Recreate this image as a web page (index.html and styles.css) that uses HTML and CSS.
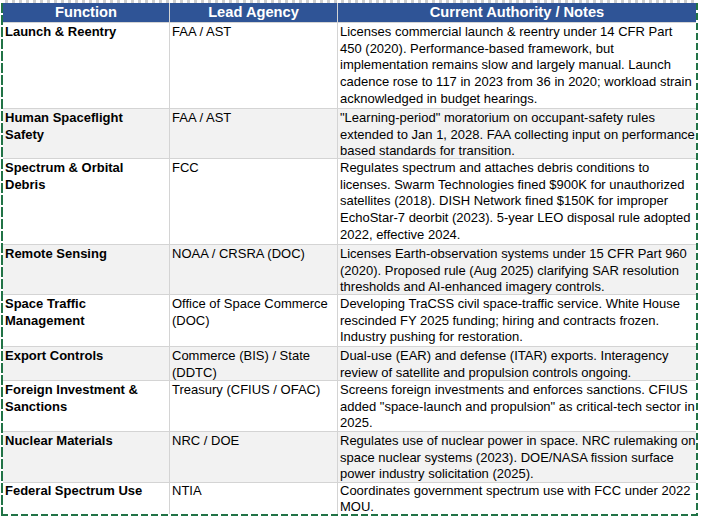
FILE: index.html
```html
<!DOCTYPE html>
<html>
<head>
<meta charset="utf-8">
<link rel="stylesheet" href="styles.css">
</head>
<body>
<div class="sheet">
  <div class="grid">
    <div class="hd">Function</div>
    <div class="hd">Lead Agency</div>
    <div class="hd">Current Authority / Notes</div>

    <div class="c fn">Launch &amp; Reentry</div>
    <div class="c">FAA / AST</div>
    <div class="c">Licenses commercial launch &amp; reentry under 14 CFR Part<br>450 (2020). Performance-based framework, but<br>implementation remains slow and largely manual. Launch<br>cadence rose to 117 in 2023 from 36 in 2020; workload strain<br>acknowledged in budget hearings.</div>

    <div class="c fn alt">Human Spaceflight<br>Safety</div>
    <div class="c alt">FAA / AST</div>
    <div class="c alt">"Learning-period" moratorium on occupant-safety rules<br>extended to Jan 1, 2028. FAA collecting input on performance<br>based standards for transition.</div>

    <div class="c fn">Spectrum &amp; Orbital<br>Debris</div>
    <div class="c">FCC</div>
    <div class="c">Regulates spectrum and attaches debris conditions to<br>licenses. Swarm Technologies fined $900K for unauthorized<br>satellites (2018). DISH Network fined $150K for improper<br>EchoStar-7 deorbit (2023). 5-year LEO disposal rule adopted<br>2022, effective 2024.</div>

    <div class="c fn alt">Remote Sensing</div>
    <div class="c alt">NOAA / CRSRA (DOC)</div>
    <div class="c alt">Licenses Earth-observation systems under 15 CFR Part 960<br>(2020). Proposed rule (Aug 2025) clarifying SAR resolution<br>thresholds and AI-enhanced imagery controls.</div>

    <div class="c fn">Space Traffic<br>Management</div>
    <div class="c">Office of Space Commerce<br>(DOC)</div>
    <div class="c">Developing TraCSS civil space-traffic service. White House<br>rescinded FY 2025 funding; hiring and contracts frozen.<br>Industry pushing for restoration.</div>

    <div class="c fn alt">Export Controls</div>
    <div class="c alt">Commerce (BIS) / State<br>(DDTC)</div>
    <div class="c alt">Dual-use (EAR) and defense (ITAR) exports. Interagency<br>review of satellite and propulsion controls ongoing.</div>

    <div class="c fn">Foreign Investment &amp;<br>Sanctions</div>
    <div class="c">Treasury (CFIUS / OFAC)</div>
    <div class="c">Screens foreign investments and enforces sanctions. CFIUS<br>added "space-launch and propulsion" as critical-tech sector in<br>2025.</div>

    <div class="c fn alt">Nuclear Materials</div>
    <div class="c alt">NRC / DOE</div>
    <div class="c alt">Regulates use of nuclear power in space. NRC rulemaking on<br>space nuclear systems (2023). DOE/NASA fission surface<br>power industry solicitation (2025).</div>

    <div class="c fn last">Federal Spectrum Use</div>
    <div class="c last">NTIA</div>
    <div class="c last">Coordinates government spectrum use with FCC under 2022<br>MOU.</div>
  </div>
</div>
</body>
</html>
```

FILE: styles.css
```css
html, body {
  margin: 0;
  padding: 0;
  background: #ffffff;
}

body {
  font-family: "Liberation Sans", Arial, sans-serif;
  color: #000000;
}

.sheet {
  width: 693px;
  margin-left: 1px;
  padding: 3px 2px 2px 2px;
  background:
    repeating-linear-gradient(to right, #ffffff 0 4px, #cfcfcf 4px 7px) left top / 100% 3px no-repeat,
    repeating-linear-gradient(to right, #217346 0 7px, transparent 7px 10px) left bottom / 100% 2px no-repeat,
    repeating-linear-gradient(to bottom, #217346 0 10px, transparent 10px 12px) left 0 top 3px / 2px calc(100% - 3px) no-repeat,
    repeating-linear-gradient(to bottom, #217346 0 7px, transparent 7px 10px) right 0 top 3px / 2px calc(100% - 3px) no-repeat,
    #ffffff;
}

.grid {
  display: grid;
  grid-template-columns: 166px 167px 358px;
  grid-template-rows: 19px 85px 49px 85px 49px 51px 33px 50px 50px 31px;
  gap: 1px;
  background: #d4d4d4;
}

.hd {
  background: #2f5496;
  color: #ffffff;
  font-weight: bold;
  font-size: 14.67px;
  line-height: 19px;
  text-align: center;
  white-space: nowrap;
}

.c {
  background: #ffffff;
  font-size: 13px;
  line-height: 16.7px;
  padding: 1px 2px 0 2px;
  white-space: nowrap;
}

.c.last {
  padding-top: 0;
  line-height: 16px;
}

.c.alt {
  background: #f2f2f2;
}

.fn {
  font-weight: bold;
}
```
